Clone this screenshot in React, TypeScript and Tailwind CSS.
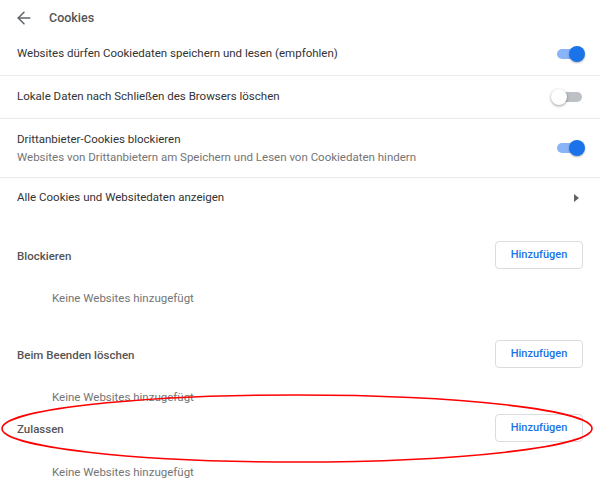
import { ArrowLeft } from "lucide-react";

function Toggle({ on }: { on: boolean }) {
  return (
    <div className="relative mr-[-2px] h-4 w-[34px] shrink-0">
      {/* track */}
      <div
        className={
          on
            ? "absolute left-[6px] top-[3px] h-[10px] w-[25px] rounded-full bg-[#8ab4f8]"
            : "absolute left-[6px] top-[3px] h-[10px] w-[25px] rounded-full bg-[#bdc1c6]"
        }
      />
      {/* knob */}
      <div
        className={
          on
            ? "absolute left-[18px] top-0 h-4 w-4 rounded-full bg-[#1a73e8] shadow-[0_1px_2px_rgba(0,0,0,0.3)]"
            : "absolute left-0 top-0 h-4 w-4 rounded-full bg-white shadow-[0_1px_3px_rgba(0,0,0,0.4)]"
        }
      />
    </div>
  );
}

function AddButton() {
  return (
    <button className="h-[28px] w-[88px] rounded-[4px] border border-[#dadce0] bg-white text-[11px] font-medium text-[#1a73e8]">
      Hinzufügen
    </button>
  );
}

function Empty({ className }: { className: string }) {
  return (
    <div className={`pl-[52px] text-[11.5px] leading-5 text-[#757575] ${className}`}>
      Keine Websites hinzugefügt
    </div>
  );
}

export default function App() {
  return (
    <div
      className="relative h-[500px] w-[600px] overflow-hidden bg-white text-[11.5px] text-[#333]"
      style={{ fontFamily: "Roboto, 'Liberation Sans', sans-serif" }}
    >
      {/* Header */}
      <div className="flex h-[36px] items-center pl-[14px]">
        <ArrowLeft size={20} strokeWidth={1.8} className="text-[#5f6368]" />
        <span className="ml-[15px] text-[12.5px] font-medium text-[#555]">Cookies</span>
      </div>

      {/* Toggle rows */}
      <div className="flex h-[40px] items-center justify-between border-b border-[#ebebeb] px-[17px] pb-[3px]">
        <span>Websites dürfen Cookiedaten speichern und lesen (empfohlen)</span>
        <Toggle on />
      </div>
      <div className="flex h-[43px] items-center justify-between border-b border-[#ebebeb] px-[17px]">
        <span>Lokale Daten nach Schließen des Browsers löschen</span>
        <Toggle on={false} />
      </div>
      <div className="flex h-[59px] items-center justify-between border-b border-[#ebebeb] px-[17px]">
        <div className="flex flex-col leading-[18px]">
          <span>Drittanbieter-Cookies blockieren</span>
          <span className="text-[#757575]">
            Websites von Drittanbietern am Speichern und Lesen von Cookiedaten hindern
          </span>
        </div>
        <Toggle on />
      </div>
      <div className="flex h-[40px] items-center justify-between px-[17px]">
        <span>Alle Cookies und Websitedaten anzeigen</span>
        <svg width="5" height="8" viewBox="0 0 5 8" className="mr-[4px]">
          <path d="M0 0 L5 4 L0 8 Z" fill="#5f6368" />
        </svg>
      </div>

      {/* Site lists */}
      <div className="flex flex-col pt-[17px]">
        <div className="flex h-10 items-center justify-between px-[17px]">
          <span className="pt-[4px] font-medium text-[#555]">Blockieren</span>
          <AddButton />
        </div>
        <Empty className="pt-[13px]" />

        <div className="mt-[26px] flex h-10 items-center justify-between px-[17px]">
          <span className="pt-[3px] font-medium text-[#555]">Beim Beenden löschen</span>
          <AddButton />
        </div>
        <Empty className="pt-[13px]" />

        <div className="mt-[1px] flex h-10 items-center justify-between px-[17px]">
          <span className="pt-[4px] font-medium text-[#555]">Zulassen</span>
          <AddButton />
        </div>
        <Empty className="pt-[14px]" />
      </div>

      {/* Red annotation ellipse drawn over the screenshot */}
      <svg
        className="pointer-events-none absolute left-0 top-0"
        width="600"
        height="500"
        viewBox="0 0 600 500"
      >
        <ellipse cx="297" cy="428.5" rx="295" ry="33.5" fill="none" stroke="#ff0000" strokeWidth="1.6" />
      </svg>
    </div>
  );
}
